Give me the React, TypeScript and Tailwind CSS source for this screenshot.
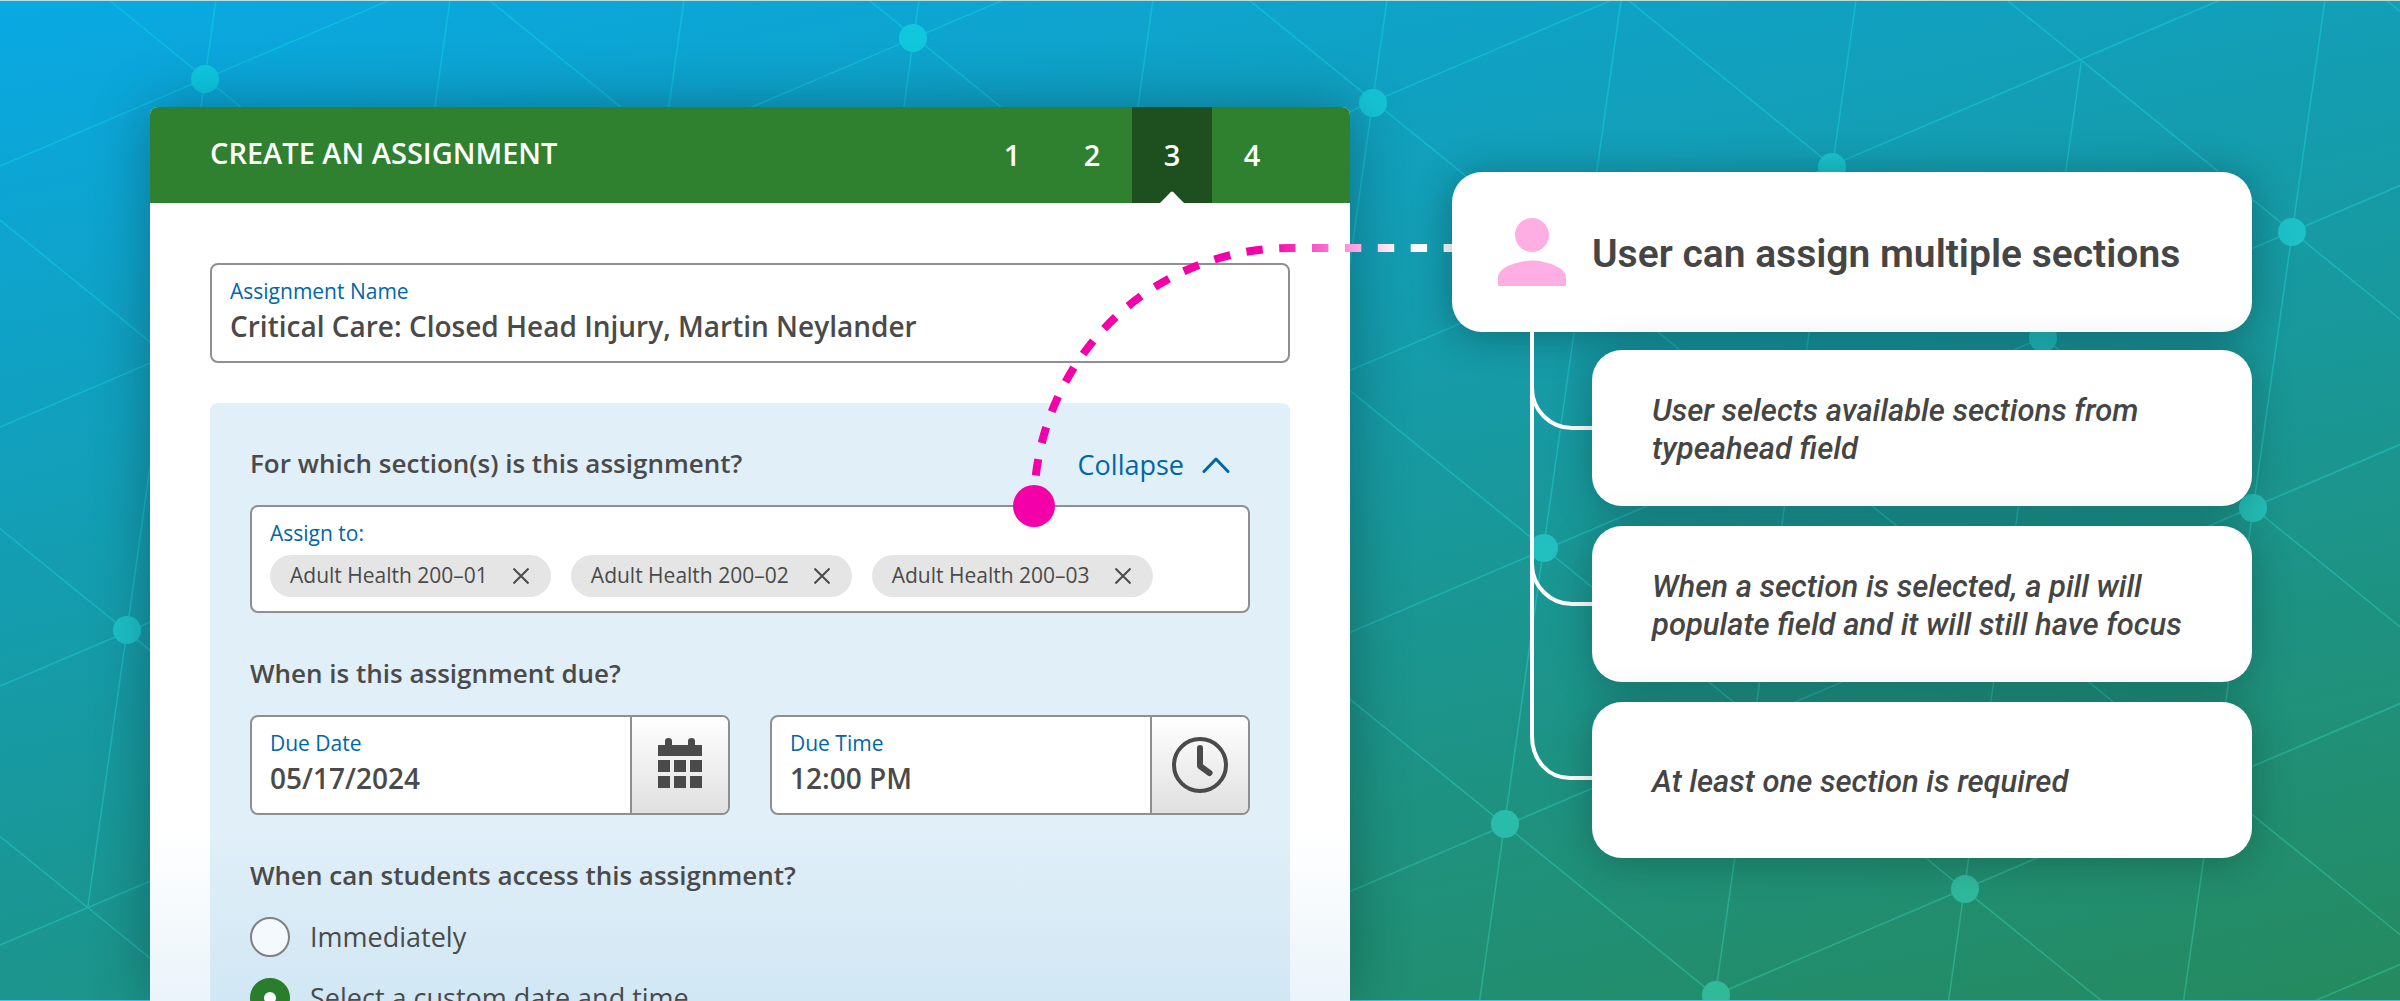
import React, { useId } from "react";

type Point = [number, number];

/* Backdrop lattice: three families of parallel lines and the dots on their crossings. */
const STEEP = -0.1413;
const FALLING = 0.812;
const RISING = -0.4256;

const steepLines: [number, number, number][] = [
  [216, 0, 906],
  [450, 0, 1001],
  [684, 0, 1001],
  [919, 0, 1001],
  [1153, 0, 1001],
  [1387, 0, 1001],
  [1621, 0, 1001],
  [1856, 0, 1001],
  [2090, 62, 1001],
  [2325, 0, 1001],
];
const fallingLines = [-1030, -651, -271, 109, 489, 869, 1249, 1628, 2007, 2386];
const risingLines = [166, 427, 686, 945, 1207, 1466, 1725, 1986];
const nodes: Point[] = [
  [205, 79],
  [913, 38],
  [127, 630],
  [1373, 103],
  [1832, 167],
  [2292, 232],
  [2043, 338],
  [2253, 508],
  [1544, 548],
  [1505, 824],
  [1965, 889],
  [1716, 995],
];

function Backdrop() {
  return (
    <div className="absolute inset-0 border-t border-b border-t-white/70 border-b-white/30 bg-[linear-gradient(168deg,#09a9e4,#258a5e)]">
      <svg
        className="h-full w-full"
        viewBox="0 0 2400 1001"
        preserveAspectRatio="xMidYMid slice"
        aria-hidden="true"
      >
        <defs>
          <linearGradient id="lattice" gradientUnits="userSpaceOnUse" x1="0" y1="0" x2="285" y2="1424">
            <stop offset="0" stopColor="#0ac9e6" />
            <stop offset="0.55" stopColor="#20c0c2" />
            <stop offset="1" stopColor="#35b78e" />
          </linearGradient>
        </defs>
        <g stroke="url(#lattice)" strokeWidth="1.5" opacity="0.7">
          {steepLines.map(([c, y1, y2]) => (
            <line key={c} x1={c + STEEP * y1} y1={y1} x2={c + STEEP * y2} y2={y2} />
          ))}
          {fallingLines.map((x) => (
            <line key={x} x1={x} y1={0} x2={x + 1001 / FALLING} y2={1001} />
          ))}
          {risingLines.map((y) => (
            <line key={y} x1={0} y1={y} x2={2400} y2={y + RISING * 2400} />
          ))}
        </g>
        <g fill="url(#lattice)">
          {nodes.map(([x, y]) => (
            <circle key={x} cx={x} cy={y} r="14" />
          ))}
        </g>
      </svg>
    </div>
  );
}

function StepNav() {
  return (
    <nav aria-label="Steps" className="flex h-full">
      {[1, 2, 3, 4].map((n) => (
        <button
          key={n}
          type="button"
          aria-current={n === 3 ? "step" : undefined}
          className={
            n === 3
              ? "relative flex h-full w-20 items-center justify-center bg-[#1e4f1e]"
              : "relative flex h-full w-20 items-center justify-center"
          }
        >
          {n}
          {n === 3 && (
            <svg className="absolute bottom-0 left-7 h-3 w-6" viewBox="0 0 24 12" aria-hidden="true">
              <path d="M0 12L10.6 1.2Q12 0 13.4 1.2L24 12Z" fill="#fff" />
            </svg>
          )}
        </button>
      ))}
    </nav>
  );
}

function Field({
  label,
  value,
  addon,
  addonLabel,
}: {
  label: string;
  value: string;
  addon?: React.ReactNode;
  addonLabel?: string;
}) {
  const id = useId();
  return (
    <div className="flex h-[100px] overflow-hidden rounded-lg border-2 border-[#8f8f8f] bg-white">
      <div className="min-w-0 flex-1 px-[18px] pt-3">
        <label htmlFor={id} className="block text-[21px] leading-7 text-[#0066a8]">
          {label}
        </label>
        <input
          id={id}
          type="text"
          defaultValue={value}
          className="block h-[42px] w-full bg-transparent text-[28px] font-semibold outline-none"
        />
      </div>
      {addon && (
        <button
          type="button"
          aria-label={addonLabel}
          className="flex w-[98px] items-center justify-center border-l-2 border-[#8f8f8f] bg-linear-to-b from-white to-[#e0e0e0]"
        >
          {addon}
        </button>
      )}
    </div>
  );
}

function CalendarIcon() {
  return (
    <svg width="44" height="50" viewBox="0 0 44 50" className="mb-1" fill="#4a4a4a" aria-hidden="true">
      <path d="M0 7H7V3Q7 0 10.500 0Q14 0 14 3V7H30V3Q30 0 33.500 0Q37 0 37 3V7H44V18H0Z" />
      {[22, 38].map((y) =>
        [0, 16, 32].map((x) => <rect key={`${x}-${y}`} x={x} y={y} width="12" height="12" />),
      )}
    </svg>
  );
}

function ClockIcon() {
  return (
    <svg width="56" height="56" viewBox="0 0 56 56" fill="none" stroke="#4a4a4a" aria-hidden="true">
      <circle cx="28" cy="28" r="26" strokeWidth="4" />
      <path d="M28 11V29L37.500 36" strokeWidth="6" strokeLinecap="round" strokeLinejoin="round" />
    </svg>
  );
}

function Pill({ name }: { name: string }) {
  return (
    <li className="flex h-[42px] items-center gap-[25px] rounded-full bg-[#e5e5e5] pr-[22px] pl-5 text-[21px]">
      {name}
      <button type="button" aria-label={`Remove ${name}`}>
        <svg width="16" height="16" viewBox="0 0 16 16" stroke="#4a4a4a" strokeWidth="2" aria-hidden="true">
          <path d="M0.500 0.500L15.500 15.500M15.500 0.500L0.500 15.500" />
        </svg>
      </button>
    </li>
  );
}

function AccessOption({ label, checked }: { label: string; checked?: boolean }) {
  return (
    <label className="flex h-10 items-center gap-5 text-[27px]">
      <input
        type="radio"
        name="access"
        defaultChecked={checked}
        className="size-10 shrink-0 appearance-none rounded-full border-2 border-[#808080] bg-white/70 checked:border-[14px] checked:border-[#2a7d2b] checked:bg-white"
      />
      {label}
    </label>
  );
}

function AssignmentForm() {
  const sections = ["Adult Health 200–01", "Adult Health 200–02", "Adult Health 200–03"];
  return (
    <section className="relative mt-[107px] min-w-0 flex-[1200] overflow-hidden rounded-t-lg bg-white font-['Open_Sans',sans-serif] text-[#4a4a4a] shadow-[0_0_60px_rgba(0,0,0,0.3)]">
      <header className="flex h-24 items-center justify-between bg-[#2f8130] pr-[58px] pl-[60px] text-[29px] font-semibold text-white">
        <h1 className="pb-1">CREATE AN ASSIGNMENT</h1>
        <StepNav />
      </header>
      <form className="px-[60px] pt-[60px]">
        <Field label="Assignment Name" value="Critical Care: Closed Head Injury, Martin Neylander" />
        <div className="mt-10 rounded-lg bg-[#e0eff8] p-10">
          <div className="flex h-10 items-center justify-between">
            <h2 className="text-[26px] font-semibold">For which section(s) is this assignment?</h2>
            <button type="button" className="flex items-center gap-[18px] pt-1 pr-5 text-[27px] text-[#0066a8]">
              Collapse
              <svg width="28" height="16" viewBox="0 0 28 16" fill="none" aria-hidden="true">
                <path d="M2 14.500L14 2L26 14.500" stroke="#0066a8" strokeWidth="3" strokeLinecap="round" strokeLinejoin="round" />
              </svg>
            </button>
          </div>
          <div className="mt-[22px] rounded-lg border-2 border-[#8f8f8f] bg-white px-[18px] pt-3 pb-3.5">
            <label htmlFor="assign-to" className="block text-[21px] leading-7 text-[#0066a8]">
              Assign to:
            </label>
            <div className="mt-2 flex items-center gap-5">
              <ul className="flex gap-5">
                {sections.map((s) => (
                  <Pill key={s} name={s} />
                ))}
              </ul>
              <input id="assign-to" type="text" className="w-0 min-w-0 flex-1 bg-transparent outline-none" />
            </div>
          </div>

          <h2 className="mt-10 flex h-10 items-center text-[26px] font-semibold">When is this assignment due?</h2>
          <div className="mt-[22px] grid grid-cols-2 gap-10">
            <Field label="Due Date" value="05/17/2024" addon={<CalendarIcon />} addonLabel="Choose date" />
            <Field label="Due Time" value="12:00 PM" addon={<ClockIcon />} addonLabel="Choose time" />
          </div>

          <fieldset className="relative z-10 mt-10">
            <legend className="flex h-10 items-center text-[26px] font-semibold">
              When can students access this assignment?
            </legend>
            <div className="mt-[22px] flex flex-col gap-[21px]">
              <AccessOption label="Immediately" />
              <AccessOption label="Select a custom date and time" checked />
            </div>
          </fieldset>
        </div>
      </form>
      <div className="pointer-events-none absolute inset-x-0 bottom-0 h-[170px] bg-linear-to-b from-[#96c8e6]/0 to-[#96c8e6]/20" />
    </section>
  );
}

/* Dashed pointer from the summary callout to the section field. */
function Pointer() {
  return (
    <svg
      className="absolute top-[68px] -left-[440px] h-[288px] w-[448px]"
      viewBox="0 0 448 288"
      fill="none"
      aria-hidden="true"
    >
      <defs>
        <linearGradient id="pointer" gradientUnits="userSpaceOnUse" x1="258" y1="0" x2="390" y2="0">
          <stop offset="0" stopColor="#f400a8" />
          <stop offset="1" stopColor="#fff" />
        </linearGradient>
      </defs>
      <path d="M448 8H278A256 258 0 0 0 22 266" stroke="url(#pointer)" strokeWidth="8" strokeDasharray="16.4 16.500" />
      <circle cx="22" cy="266" r="21" fill="#f400a8" />
    </svg>
  );
}

function Branches() {
  return (
    <svg className="absolute top-full left-[76px] h-[450px] w-16" viewBox="0 0 64 450" fill="none" aria-hidden="true">
      <g stroke="#fff" strokeWidth="4">
        <path d="M4 0V404C4 428 20 446 42 446H64" />
        <path d="M4 56C4 78 22 96 44 96H64" />
        <path d="M4 232C4 254 22 272 44 272H64" />
      </g>
    </svg>
  );
}

function Callouts() {
  const notes = [
    "User selects available sections from typeahead field",
    "When a section is selected, a pill will populate field and it will still have focus",
    "At least one section is required",
  ];
  return (
    <aside className="relative mt-[172px] min-w-0 flex-[800] font-['Roboto',sans-serif] text-[#454545]">
      <div className="relative">
        <Pointer />
        <div className="relative flex h-40 items-center gap-[26px] rounded-[30px] bg-white pl-[46px] shadow-[0_4px_40px_rgba(0,0,0,0.3)]">
          <svg width="68" height="68" viewBox="4 4 16 16" fill="#ffaee4" aria-hidden="true">
            <path d="M12 12c2.210 0 4-1.790 4-4s-1.790-4-4-4-4 1.790-4 4 1.790 4 4 4zm0 2c-2.670 0-8 1.340-8 4v2h16v-2c0-2.660-5.330-4-8-4z" />
          </svg>
          <h2 className="pt-1 text-[39px] font-semibold">User can assign multiple sections</h2>
        </div>
        <Branches />
      </div>
      <ul className="mt-[18px] ml-[140px] flex flex-col gap-5">
        {notes.map((note) => (
          <li
            key={note}
            className="relative flex h-[156px] items-center rounded-[30px] bg-white px-[60px] pt-1 text-[31px] leading-[38px] font-medium italic shadow-[0_4px_40px_rgba(0,0,0,0.25)]"
          >
            {note}
          </li>
        ))}
      </ul>
    </aside>
  );
}

export default function App() {
  return (
    <main className="relative h-screen overflow-hidden">
      <Backdrop />
      <div className="relative flex h-full gap-[102px] pr-[148px] pl-[150px]">
        <AssignmentForm />
        <Callouts />
      </div>
    </main>
  );
}
